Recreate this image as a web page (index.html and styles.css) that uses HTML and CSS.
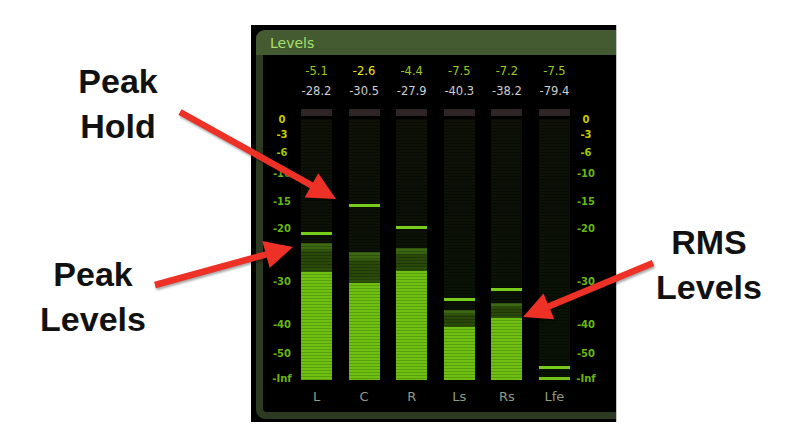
FILE: index.html
```html
<!DOCTYPE html>
<html lang="en">
<head>
<meta charset="utf-8">
<title>Levels</title>
<link rel="stylesheet" href="styles.css">
</head>
<body>
<div class="page">
  <div class="notes notes-left">
    <p class="note note-hold">Peak<br>Hold</p>
    <p class="note note-peak">Peak<br>Levels</p>
  </div>

  <section class="panel">
    <div class="frame">
      <div class="header">Levels</div>
      <div class="inner">
        <div class="scale scale-left">
          <div class="scale-track">
            <span class="tick t-yellow" style="top:1px">0</span>
            <span class="tick t-yellow" style="top:16px">-3</span>
            <span class="tick t-lime" style="top:34px">-6</span>
            <span class="tick" style="top:55px">-10</span>
            <span class="tick" style="top:83px">-15</span>
            <span class="tick" style="top:110px">-20</span>
            <span class="tick" style="top:163px">-30</span>
            <span class="tick" style="top:206px">-40</span>
            <span class="tick" style="top:235px">-50</span>
            <span class="tick" style="top:260px">-Inf</span>
          </div>
        </div>

        <div class="channels">
          <div class="channel">
            <div class="peak">-5.1</div>
            <div class="rms">-28.2</div>
            <div class="cap"></div>
            <div class="meter">
              <div class="hold" style="top:113px"></div>
              <div class="fill" style="height:137px"><div class="band"></div><div class="level" style="height:108px"></div></div>
            </div>
            <div class="name">L</div>
          </div>
          <div class="channel">
            <div class="peak peak-hot">-2.6</div>
            <div class="rms">-30.5</div>
            <div class="cap"></div>
            <div class="meter">
              <div class="hold" style="top:85px"></div>
              <div class="fill" style="height:128px"><div class="band"></div><div class="level" style="height:97px"></div></div>
            </div>
            <div class="name">C</div>
          </div>
          <div class="channel">
            <div class="peak">-4.4</div>
            <div class="rms">-27.9</div>
            <div class="cap"></div>
            <div class="meter">
              <div class="hold" style="top:107px"></div>
              <div class="fill" style="height:132px"><div class="band"></div><div class="level" style="height:109px"></div></div>
            </div>
            <div class="name">R</div>
          </div>
          <div class="channel">
            <div class="peak">-7.5</div>
            <div class="rms">-40.3</div>
            <div class="cap"></div>
            <div class="meter">
              <div class="hold" style="top:179px"></div>
              <div class="fill" style="height:70px"><div class="band"></div><div class="level" style="height:53px"></div></div>
            </div>
            <div class="name">Ls</div>
          </div>
          <div class="channel">
            <div class="peak">-7.2</div>
            <div class="rms">-38.2</div>
            <div class="cap"></div>
            <div class="meter">
              <div class="hold" style="top:169px"></div>
              <div class="fill" style="height:77px"><div class="band"></div><div class="level" style="height:62px"></div></div>
            </div>
            <div class="name">Rs</div>
          </div>
          <div class="channel">
            <div class="peak">-7.5</div>
            <div class="rms">-79.4</div>
            <div class="cap"></div>
            <div class="meter">
              <div class="hold" style="top:247px"></div>
              <div class="fill" style="height:3px"><div class="level level-min" style="height:3px"></div></div>
            </div>
            <div class="name">Lfe</div>
          </div>
        </div>

        <div class="scale scale-right">
          <div class="scale-track">
            <span class="tick t-yellow" style="top:1px">0</span>
            <span class="tick t-yellow" style="top:16px">-3</span>
            <span class="tick t-lime" style="top:34px">-6</span>
            <span class="tick" style="top:55px">-10</span>
            <span class="tick" style="top:83px">-15</span>
            <span class="tick" style="top:110px">-20</span>
            <span class="tick" style="top:163px">-30</span>
            <span class="tick" style="top:206px">-40</span>
            <span class="tick" style="top:235px">-50</span>
            <span class="tick" style="top:260px">-Inf</span>
          </div>
        </div>
      </div>
    </div>
  </section>

  <div class="notes notes-right">
    <p class="note note-rms">RMS<br>Levels</p>
  </div>

  <svg class="arrows" width="810" height="436" viewBox="0 0 810 436" aria-hidden="true">
    <g class="arrow">
      <line x1="180" y1="112" x2="312" y2="185.6"/>
      <polygon points="336,199 304.7,197.6 318.3,173.2"/>
    </g>
    <g class="arrow">
      <line x1="155" y1="285" x2="266.5" y2="254.3"/>
      <polygon points="293,247 269.7,267.9 262.3,240.9"/>
    </g>
    <g class="arrow">
      <line x1="653" y1="263" x2="548.5" y2="306.4"/>
      <polygon points="523,317 543.5,293.4 554.3,319.2"/>
    </g>
  </svg>
</div>
</body>
</html>
```

FILE: styles.css
```css
* { box-sizing: border-box; }

html, body {
  margin: 0;
  padding: 0;
  background: #ffffff;
}

.page {
  position: relative;
  width: 810px;
  height: 436px;
  display: flex;
  align-items: flex-start;
  overflow: hidden;
}

/* annotation labels */
.notes {
  flex: none;
}
.notes-left { width: 251px; }
.notes-right { width: 193px; }

.note {
  margin: 0;
  width: 160px;
  font-family: "Liberation Sans", Arial, sans-serif;
  font-weight: bold;
  font-size: 34px;
  line-height: 45px;
  color: #111111;
  text-align: center;
}
.note-hold { margin: 59px 0 0 38px; }
.note-peak { margin: 103px 0 0 13px; }
.note-rms  { margin: 220px 0 0 12px; }

/* panel */
.panel {
  flex: none;
  width: 366px;
  height: 397px;
  margin-top: 25px;
  padding: 5px 0 3px 5px;
  background: #000000;
  border-right: 1px solid #c6c6c6;
}

.frame {
  height: 100%;
  display: flex;
  flex-direction: column;
  background: #2c3a22;
  border-radius: 9px 0 0 9px;
}

.header {
  flex: none;
  height: 25px;
  padding-left: 14px;
  background: #445a30;
  border-radius: 9px 0 0 0;
  font-family: "DejaVu Sans", Verdana, sans-serif;
  font-size: 14px;
  line-height: 26px;
  color: #a6e06c;
}

.inner {
  flex: 1;
  margin: 0 0 7px 7px;
  background: #000000;
  border-radius: 0 0 0 4px;
  display: flex;
  align-items: flex-start;
}

/* scales */
.scale {
  flex: none;
  padding-top: 64px;
}
.scale-left { width: 38px; }
.scale-right { width: 32px; }

.scale-track {
  position: relative;
  height: 261px;
}

.tick {
  position: absolute;
  left: 0;
  right: 0;
  transform: translateY(-50%);
  text-align: center;
  font-family: "DejaVu Sans", Verdana, sans-serif;
  font-weight: bold;
  font-size: 10px;
  line-height: 12px;
  color: #6ab414;
}
.tick.t-yellow { color: #cccc00; }
.tick.t-lime { color: #9cc808; }

/* channels */
.channels {
  flex: none;
  width: 269px;
  display: flex;
  gap: 16.6px;
}

.channel {
  flex: none;
  width: 31px;
  display: flex;
  flex-direction: column;
  align-items: stretch;
  font-family: "DejaVu Sans", Verdana, sans-serif;
  text-align: center;
}

.peak, .rms {
  margin: 0 -10px;
  font-size: 11.5px;
  line-height: 16px;
  white-space: nowrap;
}
.peak {
  margin-top: 8px;
  color: #9ccb1e;
}
.peak.peak-hot { color: #ecec10; }
.rms {
  margin-top: 4px;
  color: #cfcfcf;
}

.cap {
  height: 7px;
  margin-top: 10px;
  background: #2f2527;
}

.meter {
  position: relative;
  height: 261px;
  margin-top: 3px;
  display: flex;
  flex-direction: column;
  justify-content: flex-end;
  background:
    repeating-linear-gradient(180deg, rgba(0,0,0,0.35) 0 1px, rgba(0,0,0,0) 1px 3px),
    linear-gradient(180deg, #0f1108 0%, #0c1107 30%, #091306 100%);
}

.hold {
  position: absolute;
  left: 0;
  right: 0;
  height: 3px;
  background: #78cc1a;
}

.fill {
  display: flex;
  flex-direction: column;
}

.band {
  flex: 1;
  background:
    repeating-linear-gradient(180deg, rgba(0,0,0,0.22) 0 1px, rgba(0,0,0,0) 1px 3px),
    linear-gradient(180deg, #3e6c12 0%, #3a6510 22%, #2a4a0a 30%, #284709 75%, #2f540b 100%);
}

.level {
  flex: none;
  background: repeating-linear-gradient(180deg, #70c014 0 2px, #589f0c 2px 3px);
}
.level.level-min {
  background: #74c418;
}

.name {
  margin-top: 9px;
  font-size: 13px;
  line-height: 16px;
  color: #8f9c86;
}

/* arrows overlay */
.arrows {
  position: absolute;
  left: 0;
  top: 0;
  pointer-events: none;
  filter: drop-shadow(1px 2px 1px rgba(0, 0, 0, 0.35));
}
.arrow line {
  stroke: #ee3126;
  stroke-width: 6.5;
}
.arrow polygon {
  fill: #ee3126;
}
```
